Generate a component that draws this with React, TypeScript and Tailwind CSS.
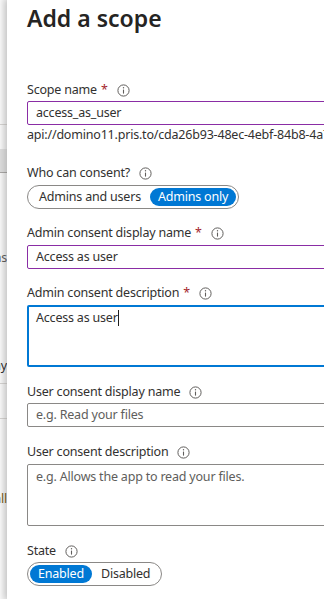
import React from 'react';

function InfoIcon() {
  return (
    <svg width="13" height="13" viewBox="0 0 13 13" className="ml-[9px] shrink-0">
      <circle cx="6.5" cy="6.5" r="5.6" fill="none" stroke="#605e5c" strokeWidth="1" />
      <line x1="6.5" y1="5.6" x2="6.5" y2="9.6" stroke="#605e5c" strokeWidth="1.1" />
      <circle cx="6.5" cy="3.8" r="0.7" fill="#605e5c" />
    </svg>
  );
}

function Label({ text, required, className = '' }: { text: string; required?: boolean; className?: string }) {
  return (
    <div className={`flex items-center h-[20px] leading-[20px] whitespace-nowrap ${className}`}>
      <span>{text}</span>
      {required && <span className="ml-[4px] text-[#a4262c]">*</span>}
      <InfoIcon />
    </div>
  );
}

function Toggle({ options, selected, className = '' }: { options: string[]; selected: number; className?: string }) {
  return (
    <div
      className={`inline-flex items-center h-[24px] p-[2px] rounded-full border border-[#8a8886] whitespace-nowrap ${className}`}
    >
      {options.map((o, i) =>
        i === selected ? (
          <span key={o} className="h-[18px] leading-[18px] px-[8px] rounded-full bg-[#0078d4] text-white">
            {o}
          </span>
        ) : (
          <span key={o} className="h-[18px] leading-[18px] px-[9px] text-[#323130]">
            {o}
          </span>
        )
      )}
    </div>
  );
}

function Fragment({ text, className = '' }: { text: string; className?: string }) {
  return (
    <div className={`flex justify-end h-[16px] leading-[16px] whitespace-nowrap ${className}`}>
      <span>{text}</span>
    </div>
  );
}

export default function App() {
  return (
    <div className="w-[324px] h-[599px] overflow-hidden flex bg-white font-['Noto_Sans',sans-serif] text-[12.5px] tracking-[-0.2px] text-[#323130]">
      {/* blade behind the panel */}
      <div className="w-[7px] shrink-0 flex flex-col overflow-hidden bg-[linear-gradient(to_right,#f7f7f7,#e9e9e9)]">
        <div className="h-[125px] shrink-0 border-b border-[#d2d0ce]" />
        <div className="h-[24px] shrink-0" />
        <div className="h-[24px] shrink-0 bg-[#dcdcdc] border-b border-[#a8a6a4]" />
        <div className="h-[77px] shrink-0" />
        <Fragment text="Permissions" className="text-[#605e5c]" />
        <div className="h-[92px] shrink-0" />
        <Fragment text="Display" />
        <div className="h-[10px] shrink-0 border-b border-[#d2d0ce]" />
        <div className="h-[35px] shrink-0 border-b border-[#d2d0ce]" />
        <div className="h-[72px] shrink-0" />
        <Fragment text="Install" className="text-[#7a5c14]" />
      </div>

      {/* Add a scope panel */}
      <div className="flex-1 min-w-0 relative z-10 bg-white pl-[20px] overflow-hidden shadow-[-3px_0_6px_rgba(0,0,0,0.14)]">
        <h1 className="mt-[2px] h-[32px] leading-[32px] text-[23px] tracking-normal font-semibold text-[#252423] whitespace-nowrap">
          Add a scope
        </h1>

        <Label text="Scope name" required className="mt-[46px]" />
        <div className="mt-[1px] w-[320px] h-[24px] border border-[#8a2da5] rounded-[2px] pl-[8px] leading-[22px] whitespace-nowrap">
          access_as_user
        </div>
        <div className="h-[20px] leading-[20px] whitespace-nowrap">
          api://domino11.pris.to/cda26b93-48ec-4ebf-84b8-4a7d0b9e1c22/access_as_user
        </div>

        <Label text="Who can consent?" className="mt-[18px]" />
        <Toggle options={['Admins and users', 'Admins only']} selected={1} className="mt-[2px]" />

        <Label text="Admin consent display name" required className="mt-[14px]" />
        <div className="mt-[2px] w-[320px] h-[24px] border border-[#8a2da5] rounded-[2px] pl-[8px] leading-[22px] whitespace-nowrap">
          Access as user
        </div>

        <Label text="Admin consent description" required className="mt-[14px]" />
        <div className="mt-[2px] w-[320px] h-[62px] border-2 border-[#0078d4] rounded-[2px] pl-[7px] pt-[2px] leading-[18px] whitespace-nowrap">
          Access as user
          <span className="inline-block align-middle w-px h-[16px] bg-[#201f1e] -mt-[2px]" />
        </div>

        <Label text="User consent display name" className="mt-[15px]" />
        <div className="mt-[1px] w-[320px] h-[24px] border border-[#8a8886] rounded-[2px] pl-[8px] leading-[22px] text-[#605e5c] whitespace-nowrap">
          e.g. Read your files
        </div>

        <Label text="User consent description" className="mt-[15px]" />
        <div className="mt-[2px] w-[320px] h-[62px] border border-[#8a8886] rounded-[2px] pl-[8px] pt-[3px] leading-[18px] text-[#605e5c] whitespace-nowrap">
          e.g. Allows the app to read your files.
        </div>

        <Label text="State" className="mt-[15px]" />
        <Toggle options={['Enabled', 'Disabled']} selected={0} className="mt-[1px]" />
      </div>
    </div>
  );
}
